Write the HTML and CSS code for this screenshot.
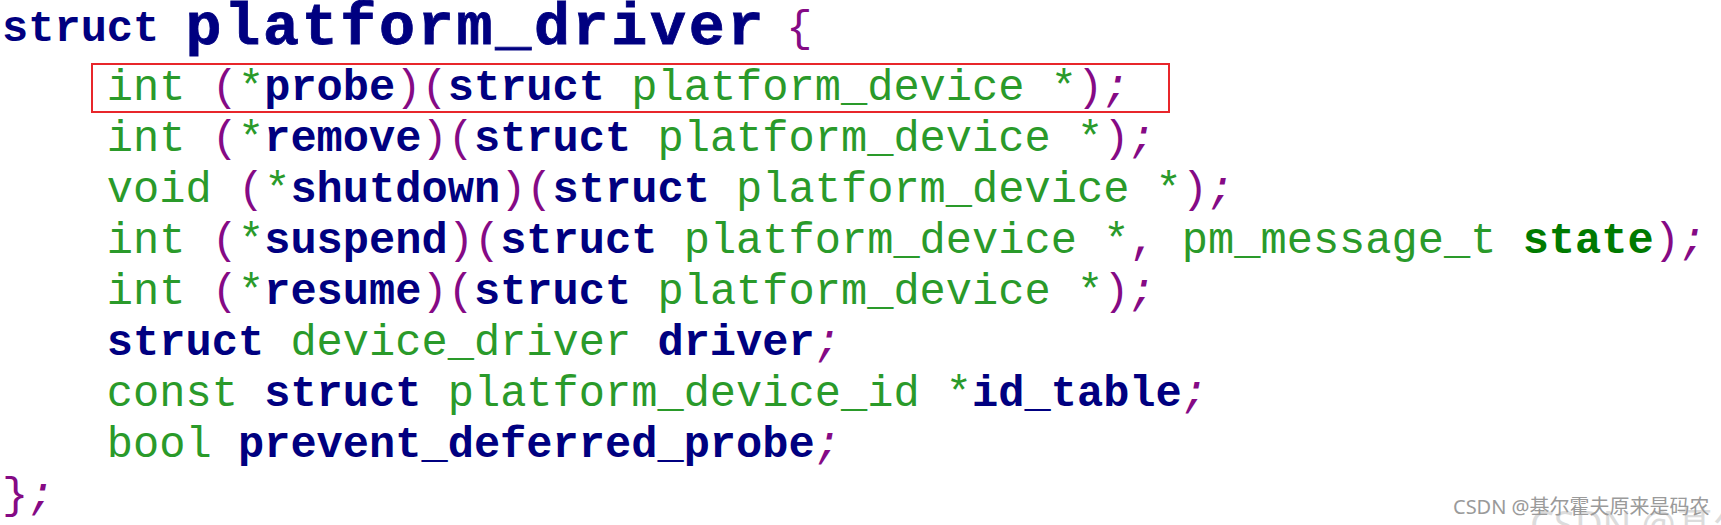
FILE: index.html
```html
<!DOCTYPE html>
<html lang="zh">
<head>
<meta charset="utf-8">
<title>struct platform_driver</title>
<link rel="stylesheet" href="styles.css">
</head>
<body>
<div class="page">
  <div class="code">
    <div class="line title"><b class="kw">struct</b> <b class="name">platform_driver</b> <span class="p">{</span></div>
    <div class="line ind"><span class="t">int</span> <span class="p">(</span><span class="t">*</span><b class="kw">probe</b><span class="p">)(</span><b class="kw">struct</b> <span class="t">platform_device *</span><span class="p">)</span><i class="p semi">;</i></div>
    <div class="line ind"><span class="t">int</span> <span class="p">(</span><span class="t">*</span><b class="kw">remove</b><span class="p">)(</span><b class="kw">struct</b> <span class="t">platform_device *</span><span class="p">)</span><i class="p semi">;</i></div>
    <div class="line ind"><span class="t">void</span> <span class="p">(</span><span class="t">*</span><b class="kw">shutdown</b><span class="p">)(</span><b class="kw">struct</b> <span class="t">platform_device *</span><span class="p">)</span><i class="p semi">;</i></div>
    <div class="line ind"><span class="t">int</span> <span class="p">(</span><span class="t">*</span><b class="kw">suspend</b><span class="p">)(</span><b class="kw">struct</b> <span class="t">platform_device *</span><span class="p">,</span> <span class="t">pm_message_t</span> <b class="gb">state</b><span class="p">)</span><i class="p semi">;</i></div>
    <div class="line ind"><span class="t">int</span> <span class="p">(</span><span class="t">*</span><b class="kw">resume</b><span class="p">)(</span><b class="kw">struct</b> <span class="t">platform_device *</span><span class="p">)</span><i class="p semi">;</i></div>
    <div class="line ind"><b class="kw">struct</b> <span class="t">device_driver</span> <b class="kw">driver</b><i class="p semi">;</i></div>
    <div class="line ind"><span class="t">const</span> <b class="kw">struct</b> <span class="t">platform_device_id *</span><b class="kw">id_table</b><i class="p semi">;</i></div>
    <div class="line ind"><span class="t">bool</span> <b class="kw">prevent_deferred_probe</b><i class="p semi">;</i></div>
    <div class="line"><span class="p">}</span><i class="p semi">;</i></div>
    <div class="mark"></div>
  </div>
  <div class="wm-big">CSDN @基尔霍夫原来是码农</div>
  <div class="wm">CSDN @基尔霍夫原来是码农</div>
</div>
</body>
</html>
```

FILE: styles.css
```css
html, body {
  margin: 0;
  padding: 0;
  background: #ffffff;
}

body {
  width: 1721px;
  height: 525px;
  overflow: hidden;
}

.page {
  position: relative;
  width: 1721px;
  height: 525px;
  overflow: hidden;
}

.code {
  position: relative;
  font-family: "Liberation Mono", "Courier New", monospace;
  font-size: 43.7px;
  line-height: 51px;
  padding-top: 4px;
  padding-left: 2px;
  color: #2a9a2a;
}

.line {
  height: 51px;
  white-space: pre;
}

.title {
  margin-bottom: 8px;
}

.ind {
  padding-left: 4ch;
}

.kw {
  color: #000080;
  font-weight: bold;
}

.name {
  color: #000080;
  font-weight: bold;
  font-size: 60px;
  letter-spacing: 2.7px;
  margin-right: -6px;
  line-height: 0;
  vertical-align: -3px;
  -webkit-text-stroke: 0.8px #000080;
}

.t {
  color: #2a9a2a;
}

.gb {
  color: #007a00;
  font-weight: bold;
}

.p {
  color: #850a85;
}

.semi {
  font-style: italic;
}

.mark {
  position: absolute;
  left: 91px;
  top: 63px;
  width: 1079px;
  height: 50px;
  box-sizing: border-box;
  border: 2px solid #e8262b;
}

.wm {
  position: absolute;
  left: 1453px;
  top: 494px;
  font-family: "Noto Sans", "Noto Sans CJK SC", sans-serif;
  font-size: 20px;
  line-height: 26px;
  color: #9a9a9a;
  white-space: nowrap;
}

.wm-big {
  position: absolute;
  left: 1530px;
  top: 498px;
  font-family: "Noto Sans", "Noto Sans CJK SC", sans-serif;
  font-size: 38px;
  line-height: 50px;
  color: #dcdcdc;
  white-space: nowrap;
}
```
